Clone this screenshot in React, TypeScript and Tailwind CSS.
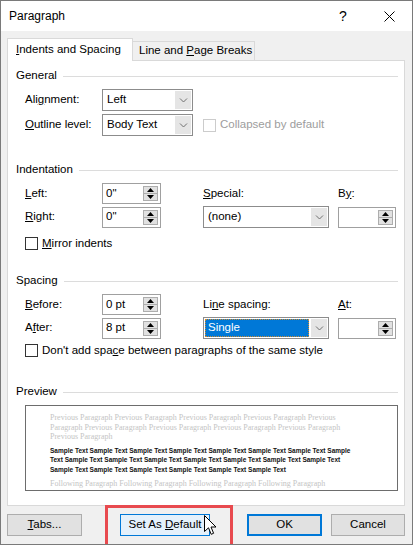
import React from 'react';

// Word "Paragraph" dialog, Windows 10 look

function Header({ label }: { label: React.ReactNode }) {
  return (
    <div className="flex items-center h-[16px]">
      <span>{label}</span>
      <div className="flex-1 h-px bg-[#dcdcdc] ml-[6px]" />
    </div>
  );
}

function Chevron() {
  return (
    <svg width="9" height="5" viewBox="0 0 9 5" className="block">
      <path d="M1 0.5 L4.5 4 L8 0.5" fill="none" stroke="#707070" strokeWidth="1" />
    </svg>
  );
}

function Combo({ value, className, selected }: { value: string; className: string; selected?: boolean }) {
  return (
    <div className={`flex h-[22px] border border-[#8c8c8c] bg-white ${className}`}>
      {selected ? (
        <div className="flex-1 flex items-center p-px">
          <div className="flex-1 h-full flex items-center pl-[3px] bg-[#0078d7] text-white outline-1 outline-dotted outline-[#d08a2e] -outline-offset-1">
            {value}
          </div>
        </div>
      ) : (
        <div className="flex-1 flex items-center pl-[4px]">{value}</div>
      )}
      <div className="w-[16px] m-px bg-[#e5e5e5] flex items-center justify-center">
        <Chevron />
      </div>
    </div>
  );
}

function Spin({ value, className }: { value?: string; className: string }) {
  return (
    <div className={`flex h-[21px] border border-[#a0a0a0] bg-white ${className}`}>
      <div className="flex-1 flex items-center pl-[3px]">{value}</div>
      <div className="w-[15px] my-[2px] mr-[2px] flex flex-col border border-[#adadad]">
        <div className="flex-1 bg-[#e1e1e1] border-b border-[#adadad] flex items-center justify-center">
          <svg width="7" height="4" viewBox="0 0 7 4"><path d="M3.5 0 L7 4 L0 4 Z" fill="#000" /></svg>
        </div>
        <div className="flex-1 bg-[#e1e1e1] flex items-center justify-center">
          <svg width="7" height="4" viewBox="0 0 7 4"><path d="M0 0 L7 0 L3.5 4 Z" fill="#000" /></svg>
        </div>
      </div>
    </div>
  );
}

function Check({ disabled }: { disabled?: boolean }) {
  return (
    <div className={`w-[13px] h-[13px] border bg-white ${disabled ? 'border-[#cccccc]' : 'border-[#333333]'}`} />
  );
}

function Button({ children, className }: { children: React.ReactNode; className: string }) {
  return (
    <div className={`h-[22px] flex items-center justify-center ${className}`}>{children}</div>
  );
}

export default function App() {
  const prev = [
    'Previous Paragraph Previous Paragraph Previous Paragraph Previous Paragraph Previous',
    'Paragraph Previous Paragraph Previous Paragraph Previous Paragraph Previous Paragraph',
    'Previous Paragraph',
  ];
  const sample = [
    'Sample Text Sample Text Sample Text Sample Text Sample Text Sample Text Sample Text Sample',
    'Text Sample Text Sample Text Sample Text Sample Text Sample Text Sample Text Sample Text',
    'Sample Text Sample Text Sample Text Sample Text Sample Text Sample Text',
  ];

  return (
    <div className="relative w-[413px] h-[545px] border border-[#7a7a7a] bg-[#f0f0f0] flex flex-col overflow-hidden text-[11.5px] text-black font-['Liberation_Sans',Arial,sans-serif]">
      {/* title bar */}
      <div className="h-[30px] bg-white flex items-center">
        <div className="flex-1 pl-[8px] text-[12px]">Paragraph</div>
        <div className="w-[46px] h-full flex items-center justify-center text-[14px]">?</div>
        <div className="w-[46px] h-full flex items-center justify-center">
          <svg width="11" height="11" viewBox="0 0 11 11">
            <path d="M0.5 0.5 L10.5 10.5 M10.5 0.5 L0.5 10.5" stroke="#000" strokeWidth="1" />
          </svg>
        </div>
      </div>

      {/* tabs */}
      <div className="flex items-end h-[22px] mt-[7px] ml-[6px]">
        <div className="relative z-10 w-[126px] h-[23px] -mb-px bg-white border border-b-0 border-[#d9d9d9] flex items-center pl-[8px] pb-[1px]">
          <span><u>I</u>ndents and Spacing</span>
        </div>
        <div className="w-[122px] h-[19px] bg-[#f0f0f0] border border-l-0 border-b-0 border-[#d9d9d9] flex items-center pl-[6px]">
          <span>Line and <u>P</u>age Breaks</span>
        </div>
      </div>

      {/* panel */}
      <div className="w-[398px] h-[446px] ml-[6px] bg-white border border-[#d9d9d9] pl-[8px] pr-[6px] pt-[7px]">
        <Header label="General" />
        <div className="flex items-center pl-[9px] h-[22px] mt-[5px]">
          <span className="w-[77px]">Ali<u>g</u>nment:</span>
          <Combo value="Left" className="w-[91px]" />
        </div>
        <div className="flex items-center pl-[9px] h-[22px] mt-[3px]">
          <span className="w-[77px]"><u>O</u>utline level:</span>
          <Combo value="Body Text" className="w-[91px]" />
          <div className="ml-[10px]"><Check disabled /></div>
          <span className="ml-[4px] text-[#9d9d9d]">Collapsed by default</span>
        </div>

        <div className="mt-[26px]"><Header label="Indentation" /></div>
        <div className="flex items-center pl-[9px] h-[21px] mt-[5px]">
          <span className="w-[77px]"><u>L</u>eft:</span>
          <Spin value={'0"'} className="w-[59px]" />
          <span className="ml-[42px] w-[135px]"><u>S</u>pecial:</span>
          <span>B<u>y</u>:</span>
        </div>
        <div className="flex items-center pl-[9px] h-[22px] mt-[2px]">
          <span className="w-[77px]"><u>R</u>ight:</span>
          <Spin value={'0"'} className="w-[59px]" />
          <Combo value="(none)" className="ml-[42px] w-[126px]" />
          <Spin className="ml-[9px] w-[58px]" />
        </div>
        <div className="flex items-center pl-[9px] h-[13px] mt-[9px]">
          <Check />
          <span className="ml-[4px]"><u>M</u>irror indents</span>
        </div>

        <div className="mt-[23px]"><Header label="Spacing" /></div>
        <div className="flex items-center pl-[9px] h-[21px] mt-[5px]">
          <span className="w-[77px]"><u>B</u>efore:</span>
          <Spin value="0 pt" className="w-[59px]" />
          <span className="ml-[42px] w-[135px]">Li<u>n</u>e spacing:</span>
          <span><u>A</u>t:</span>
        </div>
        <div className="flex items-center pl-[9px] h-[22px] mt-[2px]">
          <span className="w-[77px]">A<u>f</u>ter:</span>
          <Spin value="8 pt" className="w-[59px]" />
          <Combo value="Single" selected className="ml-[42px] w-[126px]" />
          <Spin className="ml-[9px] w-[58px]" />
        </div>
        <div className="flex items-center pl-[9px] h-[13px] mt-[5px]">
          <Check />
          <span className="ml-[4px]">Don't add spa<u>c</u>e between paragraphs of the same style</span>
        </div>

        <div className="mt-[27px]"><Header label="Preview" /></div>
        <div className="ml-[9px] mt-[5px] w-[373px] h-[86px] border border-[#6d6d6d] bg-white pl-[24px] pt-[7px] overflow-hidden whitespace-nowrap">
          <div className="text-[8px] leading-[9.7px] text-[#c4c4c4] font-['Liberation_Serif',serif]">
            {prev.map((l) => <div key={l}>{l}</div>)}
          </div>
          <div className="mt-[4px] text-[6.5px] leading-[9.3px] font-bold text-[#111]">
            {sample.map((l) => <div key={l}>{l}</div>)}
          </div>
          <div className="mt-[5px] text-[8px] leading-[9.7px] text-[#c4c4c4] font-['Liberation_Serif',serif]">
            Following Paragraph Following Paragraph Following Paragraph Following Paragraph
          </div>
        </div>
      </div>

      {/* buttons */}
      <div className="flex mt-[8px]">
        <Button className="ml-[6px] w-[75px] bg-[#e1e1e1] border border-[#adadad]"><span><u>T</u>abs...</span></Button>
        <Button className="ml-[38px] w-[90px] bg-[#e5f1fb] border border-[#0078d7]"><span>Set As <u>D</u>efault</span></Button>
        <Button className="ml-[37px] w-[75px] bg-[#e1e1e1] border-2 border-[#0078d7]">OK</Button>
        <Button className="ml-[9px] w-[74px] bg-[#e1e1e1] border border-[#adadad]">Cancel</Button>
      </div>

      {/* red annotation box */}
      <div className="absolute left-[104px] top-[504px] w-[128px] h-[42px] border-[3px] border-[#e84a4f]" />

      {/* mouse pointer */}
      <svg className="absolute left-[203px] top-[514px]" width="13" height="21" viewBox="0 0 13 21">
        <path d="M0.5 0.5 L0.5 16.5 L4.5 12.8 L7.2 19.3 L9.6 18.3 L7 12 L12 12 Z" fill="#fff" stroke="#000" strokeWidth="1" strokeLinejoin="round" />
      </svg>
    </div>
  );
}
